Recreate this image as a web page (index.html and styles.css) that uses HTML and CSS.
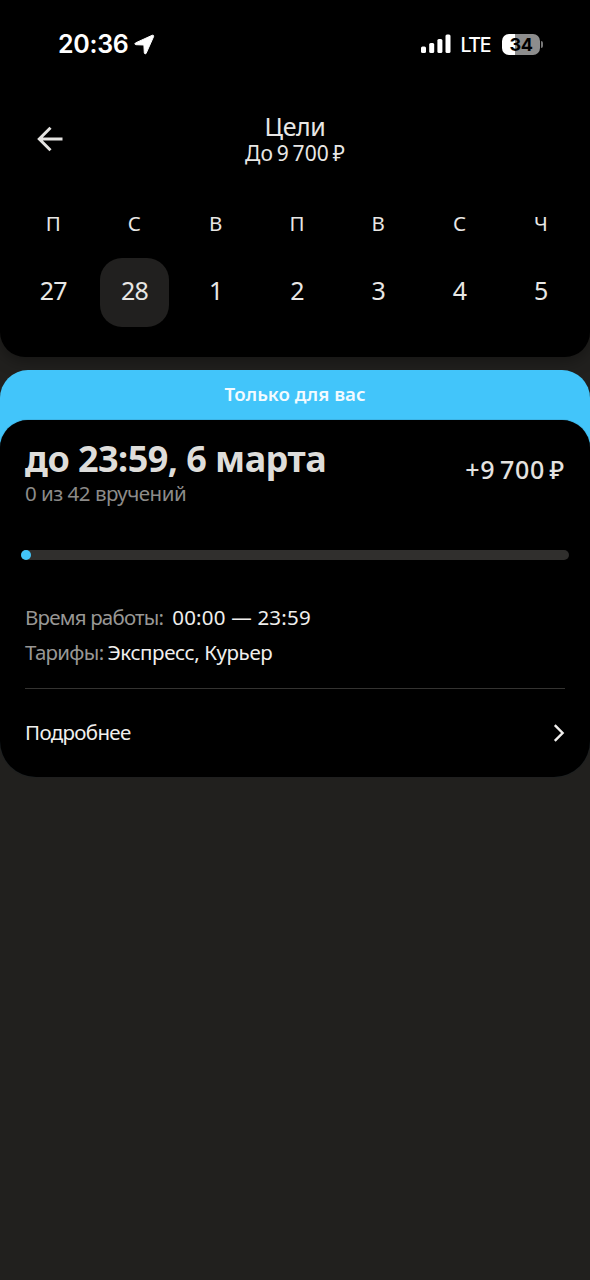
FILE: index.html
```html
<!DOCTYPE html>
<html lang="ru">
<head>
<meta charset="utf-8">
<title>Цели</title>
<link rel="stylesheet" href="styles.css">
</head>
<body>
<header class="top">
  <div class="status">
    <div class="status-left">
      <span class="clock">20:36</span>
      <svg class="location" width="21" height="21" viewBox="0 0 21 21"><path d="M18.200 1.300 1.500 8.900c-.9.5-.7 1.700.4 1.800l8 .3.400 7.800c.1 1.200 1.400 1.500 1.900.4L19.600 2.600c.4-1-.4-1.800-1.400-1.300z" fill="#fff" stroke="#fff" stroke-width="1" stroke-linejoin="round"/></svg>
    </div>
    <div class="status-right">
      <svg class="signal" width="30" height="20" viewBox="0 0 30 20" fill="#fff"><rect x="0" y="12.500" width="5" height="6.500" rx="1.500"/><rect x="8.200" y="9" width="5" height="10" rx="1.500"/><rect x="16.400" y="5" width="5" height="14" rx="1.500"/><rect x="24.500" y="0.500" width="5" height="18.500" rx="1.500"/></svg>
      <span class="lte">LTE</span>
      <span class="battery">34</span>
      <span class="battery-tip"></span>
    </div>
  </div>
  <div class="nav">
    <svg class="back" width="26" height="26" viewBox="0 0 26 26" fill="none" stroke="#e5e4e2" stroke-width="3"><path d="M25.500 13H2.500M13.500 1.800 2.300 13l11.200 11.200"/></svg>
    <div class="heading">
      <h1 class="heading-title">Цели</h1>
      <p class="heading-sub">До 9 700 ₽</p>
    </div>
  </div>
  <div class="week">
    <div class="day"><span class="day-name">П</span><span class="day-num">27</span></div>
    <div class="day"><span class="day-name">С</span><span class="day-num day-active">28</span></div>
    <div class="day"><span class="day-name">В</span><span class="day-num">1</span></div>
    <div class="day"><span class="day-name">П</span><span class="day-num">2</span></div>
    <div class="day"><span class="day-name">В</span><span class="day-num">3</span></div>
    <div class="day"><span class="day-name">С</span><span class="day-num">4</span></div>
    <div class="day"><span class="day-name">Ч</span><span class="day-num">5</span></div>
  </div>
</header>
<main class="offer">
  <div class="banner"><span class="banner-text">Только для вас</span></div>
  <section class="card">
    <div class="summary">
      <div>
        <h2 class="goal">до 23:59, 6 марта</h2>
        <p class="count">0 из 42 вручений</p>
      </div>
      <span class="reward">+9 700 ₽</span>
    </div>
    <div class="progress"><div class="progress-dot"></div></div>
    <div class="row"><span class="label label-time">Время работы:</span><span class="value value-time">00:00 — 23:59</span></div>
    <div class="row"><span class="label label-tariff">Тарифы:</span><span class="value value-tariff">Экспресс, Курьер</span></div>
    <div class="more">
      <span class="more-text">Подробнее</span>
      <svg width="12" height="18" viewBox="0 0 12 18" fill="none" stroke="#f0efed" stroke-width="2.400"><path d="M1.800 1.200 9.600 9l-7.800 7.800"/></svg>
    </div>
  </section>
</main>
</body>
</html>
```
FILE: styles.css
```css
* { box-sizing: border-box; }
body {
  margin: 0;
  min-height: 1280px;
  background: #21201e;
  color: #e8e7e5;
  font-family: "Noto Sans", sans-serif;
}
h1, h2, p { margin: 0; font-weight: 400; }
span { white-space: nowrap; }
svg { display: block; flex: none; }

.top {
  height: 357px;
  background: #000;
  border-radius: 0 0 25px 25px;
  box-shadow: 0 4px 16px rgba(0, 0, 0, .35);
}
.status {
  display: flex;
  justify-content: space-between;
  height: 88px;
  padding: 0 47px 0 58px;
  color: #fff;
  font-family: Inter, sans-serif;
}
.status-left, .status-right { display: flex; align-items: center; height: 88px; }
.clock { font-size: 25px; font-weight: 600; letter-spacing: -.3px; }
.location { margin-left: 6px; }
.lte { margin-left: 10px; padding-top: 1px; font-size: 19.5px; font-weight: 500; letter-spacing: -1.4px; }
.battery {
  width: 38px;
  height: 21px;
  margin-left: 12px;
  border-radius: 7px;
  background: linear-gradient(90deg, #fff 34%, #8d8d8d 34%);
  color: #000;
  font-size: 18px;
  font-weight: 700;
  line-height: 21px;
  letter-spacing: -.3px;
  text-align: center;
}
.battery-tip { width: 2px; height: 7px; margin-left: 1px; border-radius: 0 2px 2px 0; background: #777; }

.nav {
  display: grid;
  grid-template-columns: 26px 1fr 26px;
  align-items: center;
  height: 102px;
  padding: 0 37px;
}
.heading { text-align: center; }
.heading-title { font-size: 25px; line-height: 27px; letter-spacing: -.4px; }
.heading-sub { font-size: 21px; line-height: 26px; letter-spacing: .1px; word-spacing: -1.8px; }

.week {
  display: grid;
  grid-template-columns: repeat(7, 1fr);
  padding: 16px 8px 0 13px;
}
.day { display: flex; flex-direction: column; align-items: center; }
.day-name { padding-right: 1px; font-size: 20.5px; line-height: 34px; }
.day-num {
  display: grid;
  place-items: center;
  width: 69px;
  height: 69px;
  margin-top: 18px;
  padding: 0 1px 5px 0;
  border-radius: 22px;
  font-size: 25px;
  letter-spacing: -.8px;
}
.day-active { background: #21201f; }

.offer {
  margin-top: 13px;
  border-radius: 28px 28px 36px 36px;
  background: linear-gradient(#42c5fa 85px, transparent 85px);
}
.banner { height: 50px; text-align: center; }
.banner-text { display: block; font-size: 18.7px; font-weight: 600; line-height: 48px; color: #f3fbff; }
.card {
  height: 357px;
  padding: 19px 25px 0;
  border-radius: 28px 28px 36px 36px;
  background: #000;
  box-shadow: 0 0 1px #16232c;
}
.summary { display: flex; justify-content: space-between; height: 111px; }
.goal { font-size: 36px; font-weight: 700; line-height: 40px; letter-spacing: -.55px; color: #deddda; white-space: nowrap; }
.count { font-size: 20.5px; line-height: 29px; letter-spacing: -.5px; color: #8c8b89; white-space: nowrap; }
.reward { font-size: 25px; font-weight: 500; line-height: 61px; letter-spacing: .7px; word-spacing: -2.5px; color: #e4e3e0; }
.progress { height: 10px; margin: 0 -4px 45px; border-radius: 5px; background: #302f2d; }
.progress-dot { width: 10px; height: 10px; border-radius: 50%; background: #42c5fa; }
.row { display: flex; height: 35px; font-size: 20.5px; line-height: 25px; }
.label { color: #989795; }
.label-time { letter-spacing: -.8px; }
.label-tariff { letter-spacing: -.7px; }
.value { color: #f0efed; }
.value-time { margin-left: 9px; letter-spacing: .2px; }
.value-tariff { margin-left: 4px; letter-spacing: -.4px; }
.more {
  display: flex;
  justify-content: space-between;
  align-items: center;
  height: 88px;
  margin-top: 13px;
  border-top: 1px solid #343331;
  color: #f0efed;
}
.more-text { padding-bottom: 1px; font-size: 20.5px; letter-spacing: -.65px; }
```
